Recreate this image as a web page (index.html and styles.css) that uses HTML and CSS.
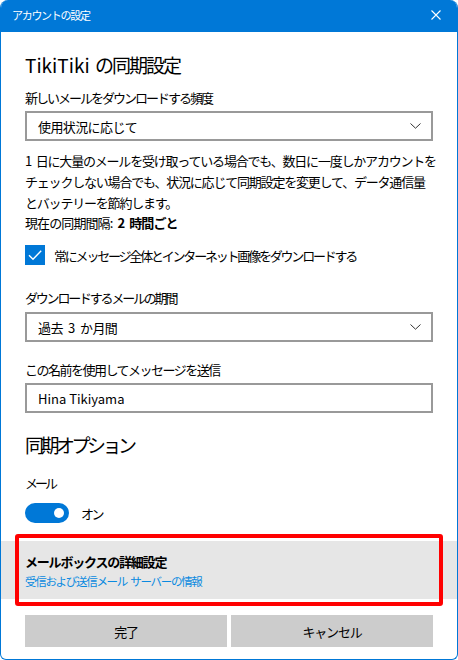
FILE: index.html
```html
<!DOCTYPE html>
<html lang="ja">
<head>
<meta charset="utf-8">
<title>アカウントの設定</title>
<link rel="stylesheet" href="styles.css">
</head>
<body>
<div class="window">
  <div class="titlebar">
    <span class="title">アカウントの設定</span>
    <svg class="close" width="10" height="10" viewBox="0 0 10 10"><path d="M0.5 0.5 L9.5 9.5 M9.5 0.5 L0.5 9.5" stroke="#fff" stroke-width="1.1" fill="none"/></svg>
  </div>
  <div class="content">
    <h1 class="heading first"><span class="latin">TikiTiki</span> の同期設定</h1>
    <div class="label l1">新しいメールをダウンロードする頻度</div>
    <div class="select s1"><span class="sel-text1">使用状況に応じて</span><svg class="chev" width="11" height="6" viewBox="0 0 11 6"><path d="M0.5 0.5 L5.5 5.2 L10.5 0.5" stroke="#333" stroke-width="1" fill="none"/></svg></div>
    <p class="para">1 日に大量のメールを受け取っている場合でも、数日に一度しかアカウントを<br>チェックしない場合でも、状況に応じて同期設定を変更して、データ通信量<br>とバッテリーを節約します。</p>
    <div class="current">現在の同期間隔: <b>2 時間ごと</b></div>
    <div class="check-row">
      <span class="checkbox"><svg width="20" height="20" viewBox="0 0 20 20"><path d="M4 10.2 L8 14.2 L16.2 5.8" stroke="#fff" stroke-width="1.4" fill="none"/></svg></span>
      <span class="check-text">常にメッセージ全体とインターネット画像をダウンロードする</span>
    </div>
    <div class="label l2">ダウンロードするメールの期間</div>
    <div class="select s2"><span class="sel-text2">過去 3 か月間</span><svg class="chev" width="11" height="6" viewBox="0 0 11 6"><path d="M0.5 0.5 L5.5 5.2 L10.5 0.5" stroke="#333" stroke-width="1" fill="none"/></svg></div>
    <div class="label l3">この名前を使用してメッセージを送信</div>
    <div class="input">Hina Tikiyama</div>
    <h2 class="heading second">同期オプション</h2>
    <div class="label l4">メール</div>
    <div class="toggle-row">
      <span class="toggle"><span class="knob"></span></span>
      <span class="on-text">オン</span>
    </div>
  </div>
  <div class="band">
    <div class="band-title">メールボックスの詳細設定</div>
    <div class="band-link">受信および送信メール サーバーの情報</div>
    <div class="highlight"></div>
  </div>
  <div class="footer">
    <div class="btn">完了</div>
    <div class="btn">キャンセル</div>
  </div>
</div>
</body>
</html>
```

FILE: styles.css
```css
* { box-sizing: border-box; }
html, body { margin: 0; padding: 0; background: #fff; }
body {
  font-family: "Noto Sans CJK JP", "Noto Sans", sans-serif;
  color: #000;
}
.window {
  width: 458px;
  height: 660px;
  border: 1px solid #0078d7;
  border-top: none;
  border-radius: 8px 8px 6px 6px;
  overflow: hidden;
  display: flex;
  flex-direction: column;
  position: relative;
  background: #fff;
}
.titlebar {
  height: 32px;
  background: #0078d7;
  display: flex;
  align-items: center;
  justify-content: space-between;
  padding: 0 17px 0 12px;
  margin: 0 -1px;
}
.title {
  color: #fff;
  font-size: 11px;
  letter-spacing: -1.3px;
  line-height: 16px;
  padding-bottom: 2px;
}
.close { display: block; margin-bottom: 2px; }
.content {
  padding: 0 24px;
  display: flex;
  flex-direction: column;
  font-size: 13px;
  letter-spacing: -1.2px;
  word-spacing: 3px;
}
.heading {
  font-weight: 400;
  font-size: 19px;
  letter-spacing: -2px;
  line-height: 28px;
  margin: 0;
}
.latin { letter-spacing: 0; }
.first { margin-top: 19px; word-spacing: 3px; }
.second { margin-top: 18px; letter-spacing: -3.5px; }
.label { line-height: 20px; }
.l1 { margin-top: 9px; letter-spacing: -2px; }
.l2 { margin-top: 23px; letter-spacing: -2.2px; }
.l3 { margin-top: 18px; letter-spacing: -1.5px; }
.l4 { margin-top: 14px; letter-spacing: -3px; }
.select, .input {
  height: 30px;
  border: 2px solid #999;
  display: flex;
  align-items: center;
  justify-content: space-between;
  padding: 0 10px 0 11px;
}
.s1 { margin-top: 3px; }
.s2 { margin-top: 4px; }
.sel-text1 { letter-spacing: -0.6px; }
.sel-text2 { letter-spacing: -0.6px; word-spacing: 3px; }
.input { margin-top: 3px; letter-spacing: 0; word-spacing: 0; font-size: 13px; }
.chev { display: block; }
.para {
  margin: 9px 0 0;
  line-height: 21px;
  white-space: nowrap;
}
.current { line-height: 20px; letter-spacing: -0.9px; }
.current b { font-weight: 600; }
.check-row {
  margin-top: 12px;
  height: 20px;
  display: flex;
  align-items: center;
  gap: 9px;
}
.check-text { letter-spacing: -2.2px; }
.checkbox {
  width: 20px;
  height: 20px;
  background: #0078d7;
  display: block;
}
.checkbox svg { display: block; }
.toggle-row {
  margin-top: 10px;
  height: 20px;
  display: flex;
  align-items: center;
  gap: 12px;
}
.on-text { letter-spacing: -2.5px; }
.toggle {
  width: 44px;
  height: 20px;
  border-radius: 10px;
  background: #0078d7;
  display: flex;
  align-items: center;
  justify-content: flex-end;
  padding-right: 5px;
}
.knob {
  width: 10px;
  height: 10px;
  border-radius: 50%;
  background: #fff;
}
.band {
  margin-top: 18px;
  height: 58px;
  background: #e6e6e6;
  padding: 12px 24px 0;
  position: relative;
}
.band-title {
  font-size: 13px;
  font-weight: 700;
  letter-spacing: -1.2px;
  line-height: 18px;
}
.band-link {
  margin-top: 1px;
  font-size: 11.5px;
  letter-spacing: -1.3px;
  word-spacing: 2px;
  line-height: 18px;
  color: #0a8ae0;
}
.highlight {
  position: absolute;
  top: -7px;
  bottom: -7px;
  left: 14px;
  right: 14px;
  border: 4px solid #ff0000;
  border-radius: 3px;
}
.footer {
  margin-top: 16px;
  padding: 0 24px;
  display: grid;
  grid-template-columns: 1fr 1fr;
  gap: 4px;
}
.btn {
  height: 32px;
  background: #cccccc;
  display: flex;
  align-items: center;
  justify-content: center;
  font-size: 13px;
  letter-spacing: -1.2px;
}
```
